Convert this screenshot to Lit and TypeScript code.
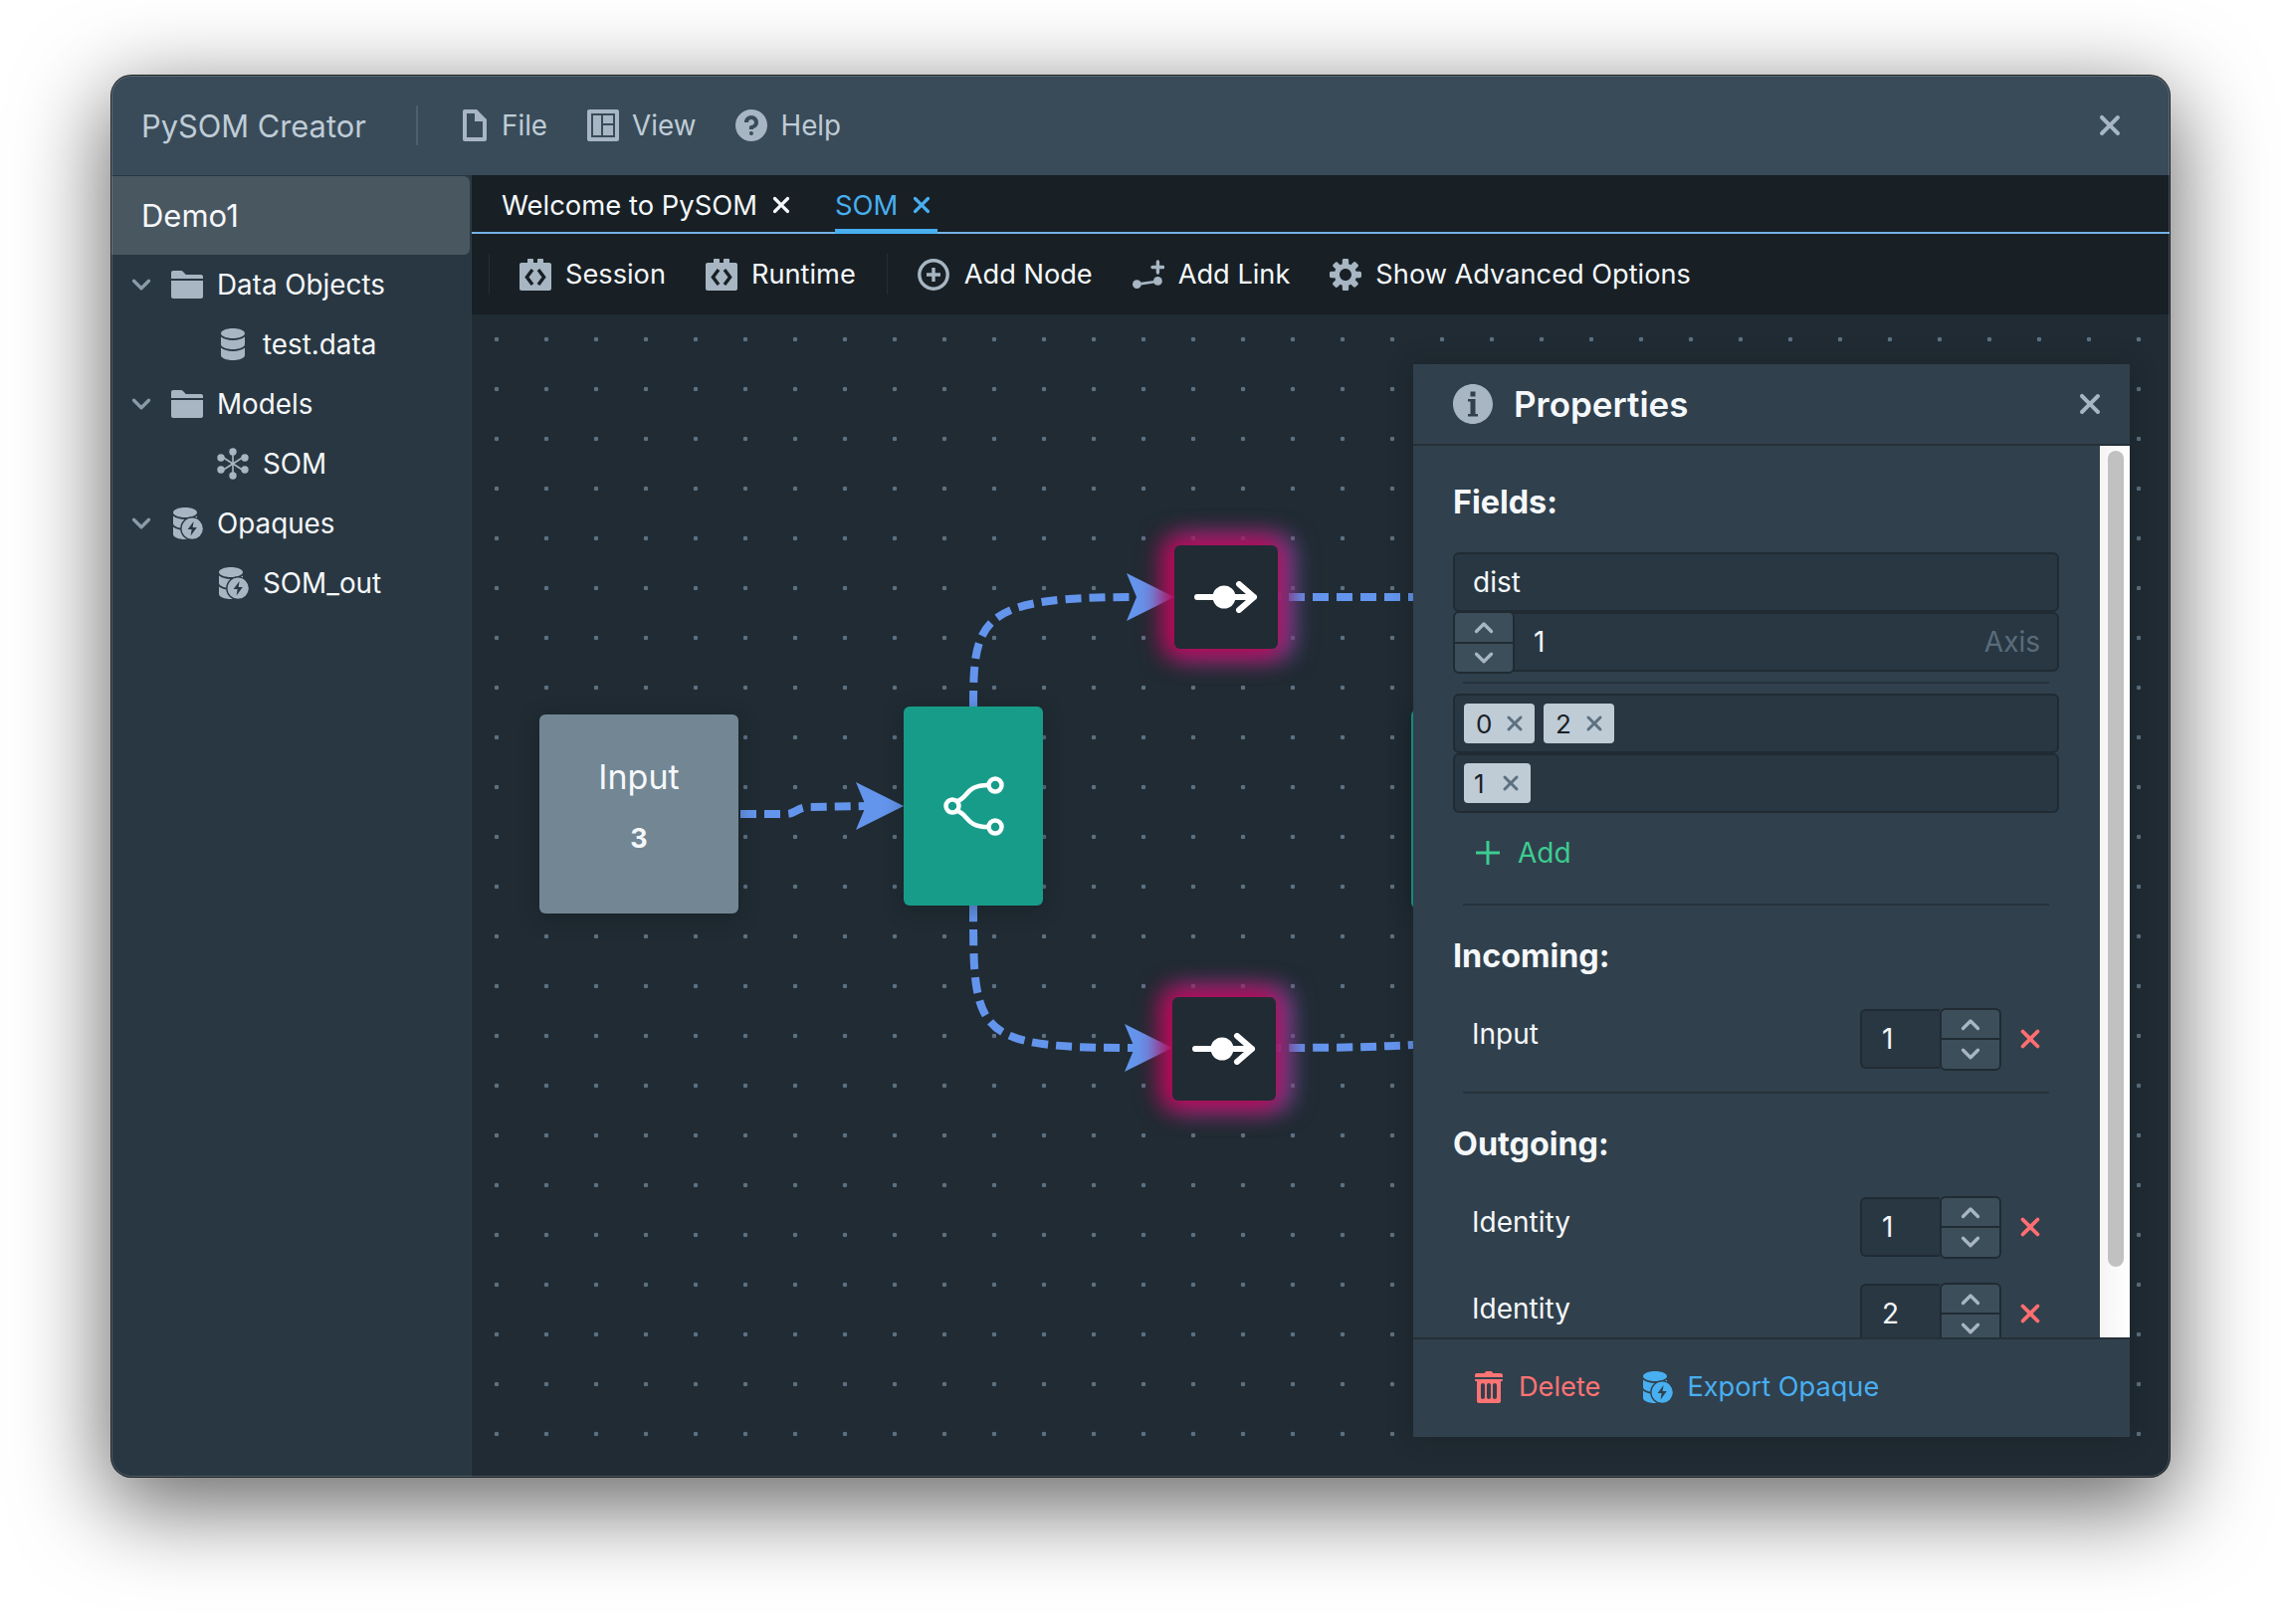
import { LitElement, html, svg, css } from 'lit';
import { customElement } from 'lit/decorators.js';

const P = {
  document: 'M9 0H3c-.55 0-1 .45-1 1v14c0 .55.45 1 1 1h10c.55 0 1-.45 1-1V5L9 0zm3 14H4V2h4v4h4v8z',
  control: 'M13 8H8v5h5V8zm0-5H8v4h5V3zm2-3H1C.45 0 0 .45 0 1v14c0 .55.45 1 1 1h14c.55 0 1-.45 1-1V1c0-.55-.45-1-1-1zm-1 14H2V2h12v12zM7 3H3v10h4V3z',
  help: 'M8 0C3.58 0 0 3.58 0 8s3.58 8 8 8 8-3.58 8-8-3.58-8-8-8zM7.98 13c-.55 0-1-.45-1-1s.45-1 1-1 1 .45 1 1-.45 1-1 1zm1-3.5v.5h-2V9c0-.55.45-1 1-1 .83 0 1.5-.67 1.5-1.5S8.81 5 7.98 5s-1.5.67-1.5 1.5h-2C4.48 4.57 6.05 3 7.98 3s3.5 1.57 3.5 3.5c0 1.58-1.06 2.9-2.5 3z',
  folder: 'M0 14c0 .55.45 1 1 1h14c.55 0 1-.45 1-1V6H0v8zM15 3H7.41L5.71 1.29A.997.997 0 005 1H1c-.55 0-1 .45-1 1v3h16V4c0-.55-.45-1-1-1z',
  cross: 'M9.41 8l3.29-3.29c.19-.18.3-.43.3-.71a1.003 1.003 0 00-1.71-.71L8 6.59l-3.29-3.3a1.003 1.003 0 00-1.42 1.42L6.59 8 3.3 11.29c-.19.18-.3.43-.3.71a1.003 1.003 0 001.71.71L8 9.41l3.29 3.29c.18.19.43.3.71.3a1.003 1.003 0 00.71-1.71L9.41 8z',
  cog: 'M15.19 6.39h-1.85c-.11-.37-.27-.71-.45-1.04l1.36-1.36c.31-.31.31-.82 0-1.13l-1.13-1.13a.803.803 0 00-1.13 0l-1.36 1.36c-.33-.17-.67-.33-1.04-.44V.79c0-.44-.36-.8-.8-.8h-1.6c-.44 0-.8.36-.8.8v1.86c-.39.12-.75.28-1.1.47l-1.3-1.3c-.3-.3-.79-.3-1.09 0L1.82 2.91c-.3.3-.3.79 0 1.09l1.3 1.3c-.2.34-.36.7-.48 1.09H.79c-.44 0-.8.36-.8.8v1.6c0 .44.36.8.8.8h1.85c.11.37.27.71.45 1.04l-1.36 1.36c-.31.31-.31.82 0 1.13l1.13 1.13c.31.31.82.31 1.13 0l1.36-1.36c.33.18.67.33 1.04.44v1.86c0 .44.36.8.8.8h1.6c.44 0 .8-.36.8-.8v-1.86c.39-.12.75-.28 1.1-.47l1.3 1.3c.3.3.79.3 1.09 0l1.09-1.09c.3-.3.3-.79 0-1.09l-1.3-1.3c.19-.35.36-.71.48-1.1h1.85c.44 0 .8-.36.8-.8v-1.6a.816.816 0 00-.81-.79zm-7.2 4.6c-1.66 0-3-1.34-3-3s1.34-3 3-3 3 1.34 3 3-1.34 3-3 3z',
  info: 'M8 0C3.58 0 0 3.58 0 8s3.58 8 8 8 8-3.58 8-8-3.58-8-8-8zM7 3h2v2H7V3zm3 10H6v-1h1V7H6V6h3v6h1v1z',
  trash: 'M14.49 3.99h-13c-.28 0-.5.22-.5.5s.22.5.5.5h.51v10c0 .55.45 1 1 1h10c.55 0 1-.45 1-1v-10h.49c.28 0 .5-.22.5-.5s-.22-.5-.5-.5zm-8.5 9c0 .55-.45 1-1 1s-1-.45-1-1v-6c0-.55.45-1 1-1s1 .45 1 1v6zm3 0c0 .55-.45 1-1 1s-1-.45-1-1v-6c0-.55.45-1 1-1s1 .45 1 1v6zm3 0c0 .55-.45 1-1 1s-1-.45-1-1v-6c0-.55.45-1 1-1s1 .45 1 1v6zm2-12h-4c0-.55-.45-1-1-1h-2c-.55 0-1 .45-1 1h-4c-.55 0-1 .45-1 1v1h14v-1c0-.55-.45-1-1-1z',
  db: 'M8 5c3.31 0 6-1.12 6-2.5S11.31 0 8 0 2 1.12 2 2.5 4.69 5 8 5zM2 4.3C3.4 5.4 5.6 6 8 6s4.6-.6 6-1.7V8c0 1.38-2.69 2.5-6 2.5S2 9.38 2 8V4.3zm0 5.5c1.4 1.1 3.6 1.7 6 1.7s4.6-.6 6-1.7v3.7c0 1.38-2.69 2.5-6 2.5s-6-1.12-6-2.5V9.800z',
};

const icon = (d: string, size = 32) => html`<svg class="ic" width=${size} height=${size} viewBox="0 0 16 16" fill="currentColor" fill-rule="evenodd"><path d=${d}></path></svg>`;

const chevron = (up: boolean, size = 24) => html`<svg width=${size} height=${size} viewBox="0 0 16 16" fill="none" stroke="currentColor" stroke-width="2.2" stroke-linecap="round" stroke-linejoin="round"><polyline points=${up ? '3,11 8,6 13,11' : '3,5.500 8,10.500 13,5.500'}></polyline></svg>`;

const somIcon = () => html`<svg class="ic" width="32" height="32" viewBox="0 0 32 32" fill="currentColor" stroke="currentColor">
  <g stroke-width="1.600">
    <line x1="16" y1="3" x2="16" y2="29"></line>
    <line x1="5" y1="9" x2="27" y2="23"></line>
    <line x1="27" y1="9" x2="5" y2="23"></line>
  </g>
  <g stroke="none">
    <circle cx="16" cy="4" r="3.700"></circle><circle cx="16" cy="28" r="3.700"></circle>
    <circle cx="4" cy="10" r="3.700"></circle><circle cx="28" cy="10" r="3.700"></circle>
    <circle cx="4" cy="22" r="3.700"></circle><circle cx="28" cy="22" r="3.700"></circle>
  </g>
</svg>`;

const opaqueIcon = () => html`<svg class="ic" width="32" height="32" viewBox="0 0 16 16" fill="currentColor" fill-rule="evenodd">
  <path transform="translate(-1 0)" d=${P.db}></path>
  <circle cx="10.600" cy="10.600" r="6" fill="var(--cut)"></circle>
  <circle cx="10.600" cy="10.600" r="5.300"></circle>
  <polygon points="11.300,7 8.300,11 10.300,11 9.800,14.200 12.900,10 10.800,10" fill="var(--cut)"></polygon>
</svg>`;

const codeIcon = () => html`<svg class="ic" width="32" height="32" viewBox="0 0 16 16" fill="currentColor">
  <path d="M4 .5c0-.3.2-.5.5-.5h2c.3 0 .5.2.5.5V2h2V.500c0-.3.2-.5.5-.5h2c.3 0 .5.2.5.5V2h3c.55 0 1 .45 1 1v12c0 .55-.45 1-1 1H1c-.55 0-1-.45-1-1V3c0-.55.45-1 1-1h3V.5z"></path>
  <g fill="none" stroke="#182026" stroke-width="1.700"><polyline points="6.500,5.500 3.700,9.250 6.500,13"></polyline><polyline points="9.500,5.500 12.300,9.250 9.500,13"></polyline></g>
</svg>`;

const addIcon = () => html`<svg class="ic" width="32" height="32" viewBox="0 0 16 16" fill="none" stroke="currentColor" stroke-width="1.700">
  <circle cx="8" cy="8" r="7.100"></circle><path d="M8 4.500v7M4.500 8h7"></path>
</svg>`;

const linkIcon = () => html`<svg class="ic" width="32" height="32" viewBox="0 0 16 16" fill="currentColor">
  <circle cx="2.200" cy="12.800" r="2.200"></circle><circle cx="12.700" cy="11.200" r="2.200"></circle>
  <path d="M2.500 12.800L12.500 11.400" stroke="currentColor" stroke-width="1.300"></path>
  <path d="M12.700 1.500v5.500M10 4.250h5.400" stroke="currentColor" stroke-width="1.700" stroke-linecap="round"></path>
</svg>`;

const NODES = [
  { x: 542, y: 718, w: 200, h: 200, kind: 'input' },
  { x: 908, y: 710, w: 140, h: 200, kind: 'split' },
  { x: 1180, y: 548, w: 104, h: 104, kind: 'identity' },
  { x: 1178, y: 1002, w: 104, h: 104, kind: 'identity' },
  { x: 1418, y: 713, w: 140, h: 200, kind: 'split hidden' },
];

const EDGES = [
  'M744 818H790C800 818 800 811 815 811L870 810',
  'M978 710C978 620 985 600 1142 600',
  'M978 910C978 1040 978 1053 1140 1053',
  'M1271 600H1420',
  'M1271 1053C1360 1053 1380 1052 1420 1050',
];

const ARROWS = ['908,810 860,786 870,810 860,834', '1180,600 1132,576 1142,600 1132,624', '1178,1053 1130,1029 1140,1053 1130,1077'];

@customElement('app-root')
export class AppRoot extends LitElement {
  static styles = css`
    :host {
      display: block;
      width: 2292px;
      height: 1632px;
      background: #fff;
      padding: 76px 112px 148px;
      box-sizing: border-box;
      font-family: Inter, 'Noto Sans', sans-serif;
      font-size: 28px;
      color: #f5f8fa;
      --cut: #293742;
    }
    .ic { flex: none; display: block; color: #a7b6c2; }
    .window {
      position: relative;
      height: 100%;
      display: flex;
      flex-direction: column;
      border-radius: 20px;
      overflow: hidden;
      background: #293742;
      box-shadow: 0 0 0 1px #1c1f22, 0 25px 90px 5px rgba(0, 0, 0, .6);
    }
    .window::after {
      content: '';
      position: absolute;
      inset: 0;
      border: 1.5px solid rgba(255, 255, 255, .2);
      border-radius: 20px;
      pointer-events: none;
    }
    .titlebar {
      flex: none;
      height: 100px;
      display: flex;
      align-items: center;
      padding-left: 30px;
      background: #394b59;
      box-shadow: 0 1px 0 #2c3a45;
      color: #bfccd6;
    }
    .title { font-size: 30.8px; width: 276px; }
    .sep { width: 2px; height: 40px; background: #4d5f6d; margin-right: 41px; }
    .menu { display: flex; align-items: center; gap: 13px; margin-right: 40px; font-size: 27.8px; }
    .menu.file { gap: 11px; }
    .close-win { margin-left: auto; margin-right: 44px; }
    .main { flex: 1; min-height: 0; display: flex; }
    .sidebar { flex: none; width: 362px; box-sizing: border-box; background: #293742; border-right: 1px solid #303a41; font-size: 27.8px; }
    .project {
      height: 79px;
      margin: 1px 1px 0 0;
      padding-left: 30px;
      display: flex;
      align-items: center;
      background: #495761;
      border-radius: 0 6px 6px 0;
      font-size: 31px;
    }
    .row { height: 60px; display: flex; align-items: center; }
    .row .chev { color: #8a9ba8; width: 60px; display: flex; justify-content: center; margin-right: 0; }
    .row .text { margin-left: 14px; }
    .row.child { padding-left: 106px; }
    .content { flex: 1; min-width: 0; display: flex; flex-direction: column; background: #202b33; }
    .tabs {
      flex: none;
      height: 59px;
      display: flex;
      gap: 38px;
      padding-left: 30px;
      box-sizing: border-box;
      background: #182026;
      border-bottom: 2px solid #74b3e6;
      font-size: 27.4px;
    }
    .tab { position: relative; display: flex; align-items: center; gap: 11px; height: 59px; padding-right: 3px; }
    .tab .ic { color: #f5f8fa; }
    .tab.active { color: #48aff0; }
    .tab.active .ic { color: #48aff0; }
    .tab.active::after { content: ''; position: absolute; left: 0; right: 0; bottom: 0; height: 5px; background: #48aff0; }
    .tool-row {
      flex: none;
      height: 81px;
      display: flex;
      align-items: center;
      padding-left: 17px;
      background: #182026;
      font-size: 27.2px;
    }
    .tool-sep { width: 1px; height: 41px; background: #232e36; margin-right: 30px; }
    .tool { display: flex; align-items: center; gap: 14px; margin-right: 40px; }
    .tool.tight { margin-right: 31px; }
    .tool.wide { gap: 15px; }
    .canvas {
      position: relative;
      flex: 1;
      min-height: 0;
      overflow: hidden;
      background-color: #202b33;
      background-image: radial-gradient(circle at center, #5c7080 0, #5c7080 2px, transparent 2.6px);
      background-size: 50px 50px;
    }
    .edges { position: absolute; left: 0; top: 0; }
    .node {
      position: absolute;
      box-sizing: border-box;
      border-radius: 6px;
      display: flex;
      flex-direction: column;
      align-items: center;
      justify-content: center;
      box-shadow: 0 4px 20px rgba(16, 22, 26, .35);
    }
    .node.input { background: #738694; padding-bottom: 17px; gap: 25px; }
    .node.input .name { font-size: 34px; }
    .node.input .count { font-size: 27px; font-weight: 700; }
    .node.split { background: #179c8a; }
    .node.identity {
      background: #202b33;
      box-shadow: -3px 0 24px 9px #c0004f, 7px 0 24px 8px #5f5aa8;
    }
    .panel {
      position: absolute;
      top: 50px;
      right: 40px;
      bottom: 40px;
      width: 720px;
      display: flex;
      flex-direction: column;
      background: #30404d;
      box-shadow: 0 0 24px rgba(16, 22, 26, .3);
    }
    .panel-head {
      flex: none;
      height: 80px;
      padding: 0 24px 0 40px;
      display: flex;
      align-items: center;
      border-bottom: 2px solid #253038;
    }
    .panel-head .name { font-size: 35px; font-weight: 600; margin-left: 21px; }
    .panel-head .x { margin-left: auto; }
    .panel-mid { flex: 1; min-height: 0; display: flex; }
    .body { flex: 1; min-width: 0; overflow: hidden; padding: 37px 41px 0 40px; }
    .scroll { flex: none; width: 30px; box-sizing: border-box; padding: 5px 6px 0 8px; background: linear-gradient(90deg, #f4f4f4, #fff); }
    .thumb { width: 16px; height: 820px; border-radius: 8px; background: #c1c1c1; }
    h3 { margin: 0; font-size: 32.3px; line-height: 40px; font-weight: 700; }
    .field {
      box-sizing: border-box;
      height: 60px;
      background: #293742;
      border: 2px solid #202b33;
      border-radius: 6px;
      display: flex;
      align-items: center;
    }
    .field.text { padding-left: 18px; }
    .gap-h { margin-top: 30px; }
    .numeric { position: relative; padding-left: 79px; padding-right: 17px; }
    .muted { margin-left: auto; color: #596c7a; }
    .stepper {
      flex: none;
      box-sizing: border-box;
      width: 62px;
      height: 63px;
      display: flex;
      flex-direction: column;
      background: #202b33;
      border: 2px solid #202b33;
      border-radius: 6px;
      gap: 2px;
      overflow: hidden;
      color: #a7b6c2;
    }
    .stepper > div { flex: 1; min-height: 0; display: flex; align-items: center; justify-content: center; background: #3d4e5b; }
    .numeric .stepper { position: absolute; left: -2px; top: -3px; }
    hr { border: 0; height: 2px; background: #27333c; margin: 10px 10px 10px; }
    .tags { padding-left: 9px; gap: 9px; }
    .tag {
      box-sizing: border-box;
      height: 40px;
      width: 71px;
      padding: 0 8px 0 12px;
      display: flex;
      align-items: center;
      justify-content: space-between;
      background: #bfccd6;
      color: #182026;
      border-radius: 4px;
      font-size: 26px;
    }
    .tag.thin { width: 67px; padding-left: 10px; }
    .tag .ic { color: #5c7080; }
    .add { height: 50px; margin-top: 15px; padding-left: 22px; display: flex; align-items: center; gap: 17px; color: #3dcc91; }
    .link-row { position: relative; height: 60px; display: flex; align-items: center; padding-left: 19px; }
    .link-row .lbl { margin-top: -10px; }
    .link-row .num { margin-left: auto; display: flex; align-items: center; }
    .link-row .val {
      box-sizing: border-box;
      width: 80px;
      height: 60px;
      padding-left: 20px;
      display: flex;
      align-items: center;
      background: #293742;
      border: 2px solid #202b33;
      border-right: 0;
      border-radius: 6px 0 0 6px;
    }
    .link-row .del { margin-left: 14px; margin-right: 14px; }
    .link-row .del .ic { color: #ff6e70; }
    .panel-foot {
      flex: none;
      height: 100px;
      box-sizing: border-box;
      border-top: 2px solid #253038;
      padding: 0 0 3px 60px;
      display: flex;
      align-items: center;
      font-size: 27.2px;
      --cut: #30404d;
    }
    .act { display: flex; align-items: center; gap: 14px; margin-right: 41px; }
    .act.red, .act.red .ic { color: #ff7373; }
    .act.blue, .act.blue .ic { color: #48aff0; }
  `;

  _stepper() {
    return html`<div class="stepper"><div>${chevron(true)}</div><div>${chevron(false)}</div></div>`;
  }

  _linkRow(label: string, value: string, top: number) {
    return html`<div class="link-row" style="margin-top:${top}px">
      <span class="lbl">${label}</span>
      <div class="num"><div class="val">${value}</div>${this._stepper()}</div>
      <span class="del">${icon(P.cross, 30)}</span>
    </div>`;
  }

  _node(n: any) {
    const pos = `left:${n.x - 474}px;top:${n.y - 316}px;width:${n.w}px;height:${n.h}px`;
    if (n.kind === 'input') {
      return html`<div class="node input" style=${pos}><span class="name">Input</span><span class="count">3</span></div>`;
    }
    if (n.kind === 'identity') {
      return html`<div class="node identity" style=${pos}>
        <svg width="64" height="32" viewBox="0 0 64 32" fill="none" stroke="#fff" stroke-width="6" stroke-linecap="round" stroke-linejoin="round">
          <path d="M3 16H60M45 3L60 16L45 29"></path><circle cx="30" cy="16" r="11.500" fill="#fff" stroke="none"></circle>
        </svg>
      </div>`;
    }
    return html`<div class="node ${n.kind}" style=${pos}>
      <svg width="64" height="64" viewBox="0 0 64 64" fill="none" stroke="#fff" stroke-width="4.500">
        <circle cx="11" cy="32" r="6.500"></circle><circle cx="54" cy="11" r="6.500"></circle><circle cx="54" cy="53" r="6.500"></circle>
        <path d="M16 27C27 24 24 11 47 11M16 37C27 40 24 53 47 53"></path>
      </svg>
    </div>`;
  }

  render() {
    return html`
      <div class="window">
        <div class="titlebar">
          <span class="title">PySOM Creator</span>
          <span class="sep"></span>
          <span class="menu file">${icon(P.document)}File</span>
          <span class="menu">${icon(P.control)}View</span>
          <span class="menu">${icon(P.help)}Help</span>
          <span class="close-win">${icon(P.cross, 32)}</span>
        </div>
        <div class="main">
          <div class="sidebar">
            <div class="project">Demo1</div>
            <div class="row"><span class="chev">${chevron(false)}</span>${icon(P.folder)}<span class="text">Data Objects</span></div>
            <div class="row child">${icon(P.db)}<span class="text">test.data</span></div>
            <div class="row"><span class="chev">${chevron(false)}</span>${icon(P.folder)}<span class="text">Models</span></div>
            <div class="row child">${somIcon()}<span class="text">SOM</span></div>
            <div class="row"><span class="chev">${chevron(false)}</span>${opaqueIcon()}<span class="text">Opaques</span></div>
            <div class="row child">${opaqueIcon()}<span class="text">SOM_out</span></div>
          </div>
          <div class="content">
            <div class="tabs">
              <div class="tab">Welcome to PySOM ${icon(P.cross, 26)}</div>
              <div class="tab active">SOM ${icon(P.cross, 26)}</div>
            </div>
            <div class="tool-row">
              <span class="tool-sep"></span>
              <span class="tool">${codeIcon()}Session</span>
              <span class="tool tight">${codeIcon()}Runtime</span>
              <span class="tool-sep"></span>
              <span class="tool wide">${addIcon()}Add Node</span>
              <span class="tool">${linkIcon()}Add Link</span>
              <span class="tool">${icon(P.cog)}Show Advanced Options</span>
            </div>
            <div class="canvas">
              <svg class="edges" width="1707" height="1168" viewBox="474 316 1707 1168" fill="none">
                ${EDGES.map(d => svg`<path d=${d} stroke="#6495ed" stroke-width="8" stroke-dasharray="16 8"></path>`)}
                ${ARROWS.map(p => svg`<polygon points=${p} fill="#6495ed"></polygon>`)}
              </svg>
              ${NODES.map(n => this._node(n))}
              <div class="panel">
                <div class="panel-head">
                  ${icon(P.info, 40)}
                  <span class="name">Properties</span>
                  <span class="x">${icon(P.cross, 32)}</span>
                </div>
                <div class="panel-mid">
                  <div class="body">
                    <h3>Fields:</h3>
                    <div class="field text gap-h">dist</div>
                    <div class="field numeric">${this._stepper()}1<span class="muted">Axis</span></div>
                    <hr />
                    <div class="field tags">
                      <span class="tag">0${icon(P.cross, 24)}</span>
                      <span class="tag">2${icon(P.cross, 24)}</span>
                    </div>
                    <div class="field tags">
                      <span class="tag thin">1${icon(P.cross, 24)}</span>
                    </div>
                    <div class="add">
                      <svg width="26" height="26" viewBox="0 0 26 26" stroke="#3dcc91" stroke-width="3"><path d="M13 1v24M1 13h24"></path></svg>
                      Add
                    </div>
                    <hr style="margin-top:26px" />
                    <h3 style="margin-top:31px">Incoming:</h3>
                    ${this._linkRow('Input', '1', 33)}
                    <hr style="margin-top:23px" />
                    <h3 style="margin-top:31px">Outgoing:</h3>
                    ${this._linkRow('Identity', '1', 33)}
                    ${this._linkRow('Identity', '2', 27)}
                  </div>
                  <div class="scroll"><div class="thumb"></div></div>
                </div>
                <div class="panel-foot">
                  <span class="act red">${icon(P.trash)}Delete</span>
                  <span class="act blue">${opaqueIcon()}Export Opaque</span>
                </div>
              </div>
            </div>
          </div>
        </div>
      </div>
    `;
  }
}
